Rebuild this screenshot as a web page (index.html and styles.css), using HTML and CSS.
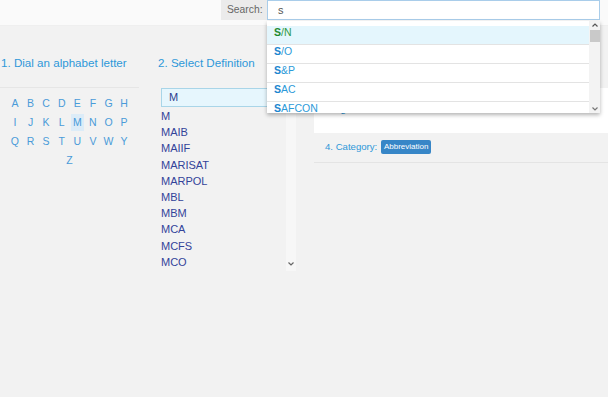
FILE: index.html
```
<!DOCTYPE html>
<html lang="en">
<head>
  <meta charset="UTF-8" />
  <meta name="viewport" content="width=device-width, initial-scale=1.0" />
  <title>Maritime Abbreviations</title>
  <link rel="stylesheet" href="styles.css">
</head>
<body>
  <header class="topbar">
    <div class="search">
      <label class="search-label" for="q">Search:</label>
      <div class="search-field">
        <input id="q" class="search-input" type="text" value="s" />
        <div class="suggest">
          <ul class="suggest-list">
            <li class="active"><b>S</b>/N</li>
            <li><b>S</b>/O</li>
            <li><b>S</b>&amp;P</li>
            <li><b>S</b>AC</li>
            <li><b>S</b>AFCON</li>
          </ul>
          <div class="suggest-bar">
            <svg class="arrow" width="6" height="4" viewBox="0 0 6 4"><polyline points="0.5,3.5 3,1 5.5,3.5" fill="none" stroke="#555" stroke-width="1.2"/></svg>
            <div class="thumb"></div>
            <div class="track"></div>
            <svg class="arrow" width="6" height="4" viewBox="0 0 6 4"><polyline points="0.5,0.5 3,3 5.5,0.5" fill="none" stroke="#777" stroke-width="1.2"/></svg>
          </div>
        </div>
      </div>
    </div>
  </header>

  <main class="steps">
    <section class="step step-letters">
      <h2>1. Dial an alphabet letter</h2>
      <div class="letters">
        <a>A</a><a>B</a><a>C</a><a>D</a><a>E</a><a>F</a><a>G</a><a>H</a>
        <a>I</a><a>J</a><a>K</a><a>L</a><a class="on">M</a><a>N</a><a>O</a><a>P</a>
        <a>Q</a><a>R</a><a>S</a><a>T</a><a>U</a><a>V</a><a>W</a><a>Y</a>
        <a>Z</a>
      </div>
    </section>

    <section class="step step-defs">
      <h2>2. Select Definition</h2>
      <div class="picked">M</div>
      <div class="deflist">
        <ul class="defs">
          <li>M</li>
          <li>MAIB</li>
          <li>MAIIF</li>
          <li>MARISAT</li>
          <li>MARPOL</li>
          <li>MBL</li>
          <li>MBM</li>
          <li>MCA</li>
          <li>MCFS</li>
          <li>MCO</li>
        </ul>
        <div class="deflist-bar">
          <svg width="6" height="4" viewBox="0 0 6 4"><polyline points="0.5,0.5 3,3 5.5,0.5" fill="none" stroke="#666" stroke-width="1.2"/></svg>
        </div>
      </div>
    </section>

    <section class="step step-meaning">
      <h2>3. Meaning</h2>
      <div class="meaning">Magnetic</div>
      <div class="category">4. Category: <span class="badge">Abbreviation</span></div>
    </section>
  </main>
</body>
</html>
```

FILE: styles.css
```
* { box-sizing: border-box; margin: 0; padding: 0; }
body {
  background: #f2f2f2;
  font-family: "Liberation Sans", Arial, sans-serif;
  font-size: 11px;
  width: 608px;
  height: 397px;
  overflow: hidden;
}
.topbar {
  height: 26px;
  background: #fafafa;
  border-bottom: 1px solid #efefef;
  display: flex;
  justify-content: flex-end;
  padding-right: 8px;
  position: relative;
  z-index: 5;
}
.search {
  display: flex;
  height: 20px;
}
.search-label {
  width: 46px;
  background: #ebebeb;
  color: #666;
  padding-left: 6px;
  line-height: 19px;
  font-size: 10.3px;
}
.search-field {
  position: relative;
  width: 333px;
}
.search-input {
  width: 100%;
  height: 20px;
  border: 1px solid #a9cdea;
  background: #fff;
  padding: 0 10px;
  font-family: inherit;
  font-size: 11px;
  color: #555;
  outline: none;
}
.suggest {
  position: absolute;
  top: 21px;
  left: 0;
  width: 333px;
  height: 92px;
  background: #fff;
  box-shadow: 0 2px 4px rgba(0,0,0,0.3);
  display: flex;
  overflow: hidden;
}
.suggest-list {
  flex: 1;
  list-style: none;
  padding-top: 5px;
}
.suggest-list li {
  line-height: 13px;
  padding: 0 7px 5px;
  border-bottom: 1px solid #e3e3e3;
  color: #2c9ad9;
  font-size: 10.5px;
}
.suggest-list li b { color: #1b86cf; }
.suggest-list li.active {
  background: #e4f6fd;
  color: #2f9a45;
}
.suggest-list li.active b { color: #1d8a30; }
.suggest-bar {
  width: 11px;
  background: #f3f3f3;
  display: flex;
  flex-direction: column;
  align-items: center;
  padding: 2px 0 2px;
}
.suggest-bar .arrow { flex: none; }
.suggest-bar .thumb {
  width: 10px;
  height: 12px;
  background: #c9c9c9;
  margin-top: 3px;
}
.suggest-bar .track { flex: 1; }

.steps {
  display: flex;
}
.step h2 {
  font-weight: normal;
  font-size: 11.6px;
  color: #2e98d9;
  line-height: 16px;
  padding-top: 29px;
  white-space: nowrap;
}
.step-letters {
  width: 139px;
}
.step-letters h2 { padding-left: 1px; }
.letters {
  margin-top: 16px;
  border-top: 1px solid #e6e6e6;
  padding: 6px 7px 0;
  display: flex;
  flex-wrap: wrap;
  justify-content: center;
}
.letters a {
  width: 13.6px;
  margin: 0 1px;
  height: 19px;
  line-height: 19px;
  text-align: center;
  color: #4a9bd9;
  font-size: 10.5px;
}
.letters a.on {
  background: #dcecf8;
  height: 17px;
  line-height: 17px;
  margin: 1px 1px;
}
.step-defs {
  width: 141px;
  margin-left: 16px;
}
.step-defs h2 { padding-left: 3px; }
.picked {
  margin: 17px 6px 0 6px;
  height: 19px;
  background: #e6f6fd;
  border: 1px solid #a9d5e8;
  color: #2c3d8f;
  padding-left: 7px;
  line-height: 17px;
}
.deflist {
  display: flex;
  height: 164px;
  padding-top: 1px;
}
.defs {
  flex: 1;
  list-style: none;
  padding: 0 0 0 6px;
}
.defs li {
  line-height: 16.2px;
  color: #33439a;
}
.deflist-bar {
  width: 10px;
  background: #f7f7f7;
  display: flex;
  align-items: flex-end;
  justify-content: center;
  padding-bottom: 5px;
}
.step-meaning {
  flex: 1;
  margin-left: 18px;
}
.step-meaning h2 { padding-left: 11px; }
.meaning {
  margin-top: 17px;
  background: #fff;
  height: 45px;
  padding: 14px 11px 0;
  color: #2e98d9;
}
.category {
  height: 30px;
  border-bottom: 1px solid #e4e4e4;
  padding: 7px 11px 0;
  color: #2e98d9;
  font-size: 9.6px;
  line-height: 14px;
}
.badge {
  display: inline-block;
  background: #3786c7;
  color: #fff;
  font-size: 8px;
  line-height: 14px;
  padding: 0 3px;
  margin-left: 1px;
  border-radius: 2px;
  vertical-align: top;
}
```
